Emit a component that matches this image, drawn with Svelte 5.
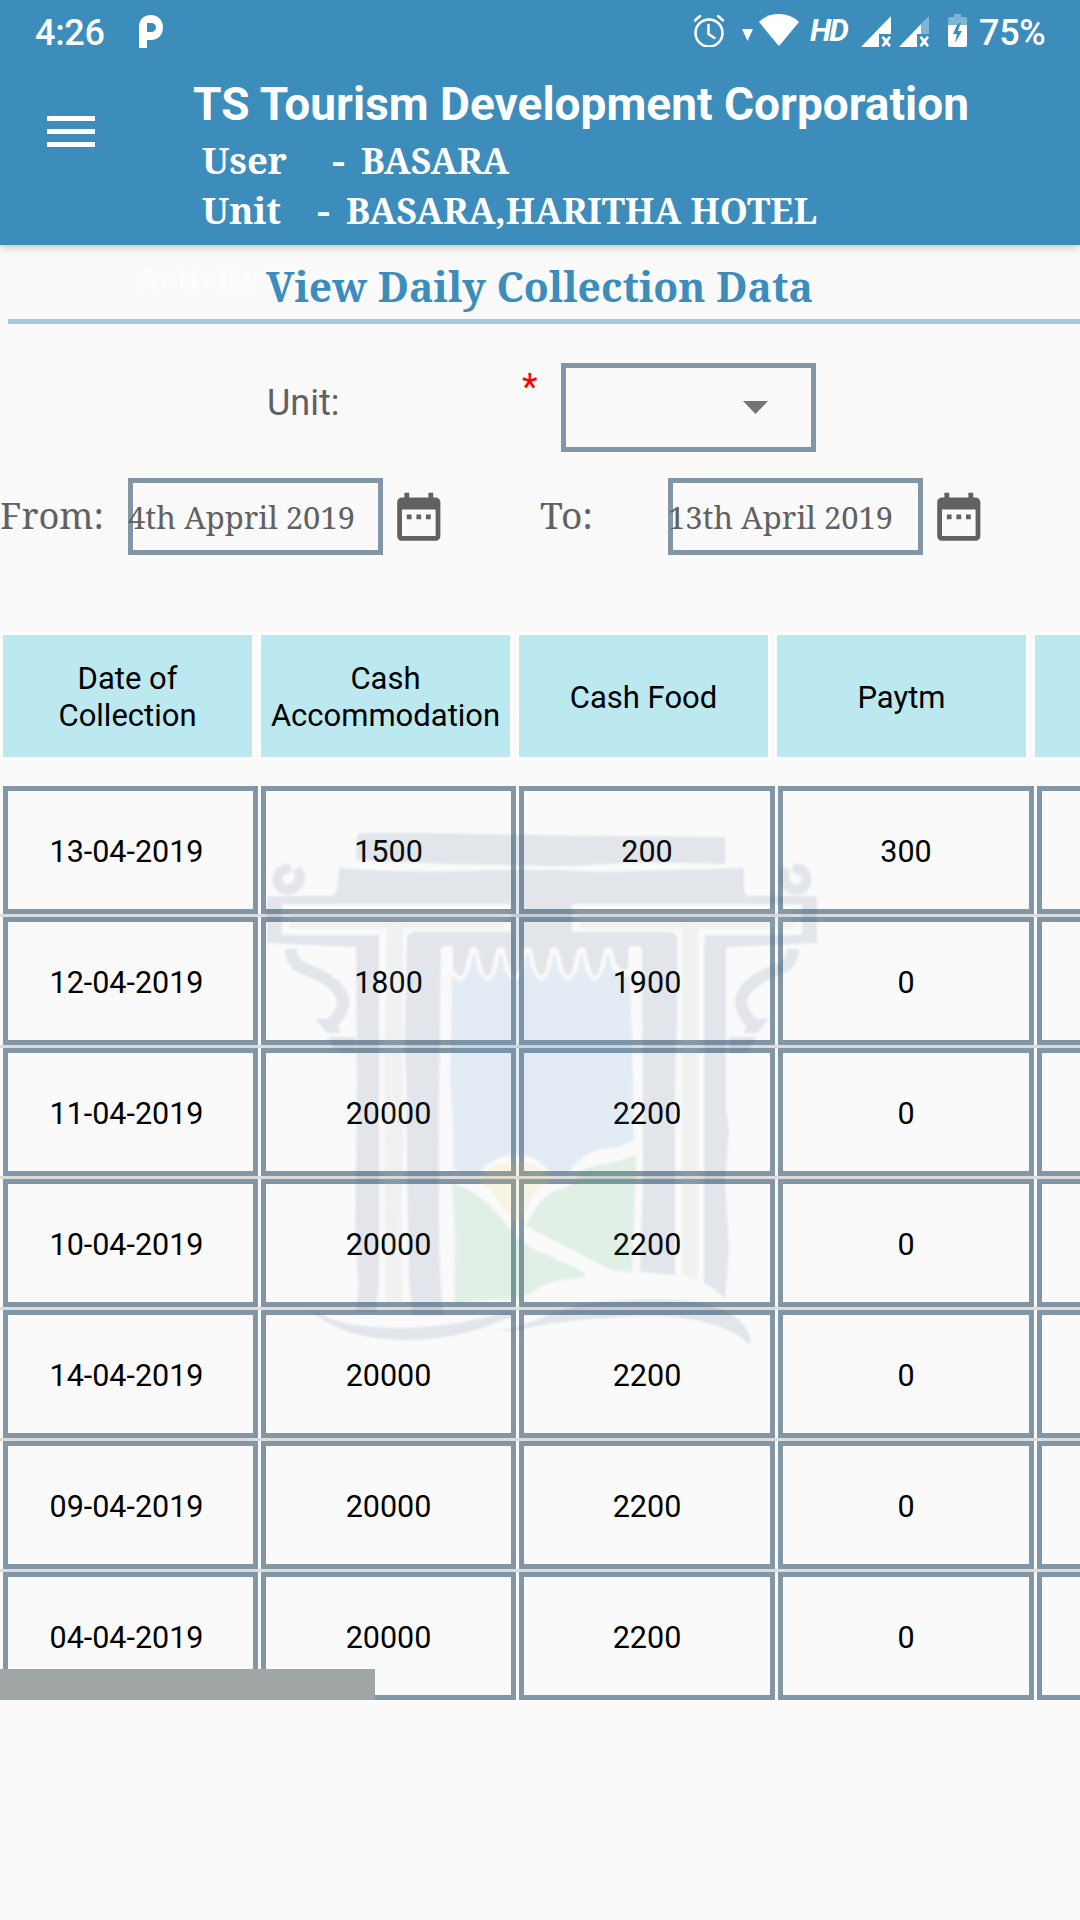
<script>
  const columns = ['Date of Collection', 'Cash Accommodation', 'Cash Food', 'Paytm', ''];
  const rows = [
    ['13-04-2019', '1500', '200', '300', ''],
    ['12-04-2019', '1800', '1900', '0', ''],
    ['11-04-2019', '20000', '2200', '0', ''],
    ['10-04-2019', '20000', '2200', '0', ''],
    ['14-04-2019', '20000', '2200', '0', ''],
    ['09-04-2019', '20000', '2200', '0', ''],
    ['04-04-2019', '20000', '2200', '0', '']
  ];

  // Scalloped edge of the emblem's curtain: lobes separated by narrow notches.
  function scallops(peak, shoulder, bottom, top, half) {
    let d = '';
    for (let i = 0; i < 6; i++) {
      const c = 460.3 + i * 26.9;
      const n = c + 13.45;
      d += ` Q${c - 3} ${bottom} ${c} ${bottom} Q${c + 4} ${bottom} ${n - half} ${shoulder}`;
      d += ` L${n - top} ${peak + 6} Q${n - top} ${peak} ${n} ${peak} Q${n + top} ${peak} ${n + top} ${peak + 6} L${n + half} ${shoulder}`;
    }
    return d;
  }
  const curtainEdge = 'M407 940 Q408 932 415 932 H669 Q677 932 677 940 V949 H642 Q641 946 638 946 L630 946 H452 Q449 945 446 946 Q441 946 440 950 H407 Z';
  const lobes = `M453 942 L453 968${scallops(947, 963, 976, 5, 7.5)} Q619 969 624 970 L628 968 L629 942 Z`;
  const sky = `M452 976${scallops(954, 969, 981, 2, 4)} Q617 974 623 976 L630 977 L632 1040 L634 1140 C622 1147 612 1149 600 1149 C585 1153 577 1162 569 1172 L552 1176 C545 1163 532 1155 517 1155 C500 1155 487 1163 478 1174 L467 1175 L453 1168 Q454 1120 450 1080 Z`;
</script>

{#snippet fit(text, width, size, cls)}
  <svg class="fit {cls}" {width} height="50" viewBox="0 0 {width} 50">
    <text x="0" y="38" font-size={size} textLength={width} lengthAdjust="spacingAndGlyphs">{text}</text>
  </svg>
{/snippet}

{#snippet calendar()}
  <svg class="calendar" viewBox="0 0 24 24">
    <path d="M9 11H7v2h2v-2zm4 0h-2v2h2v-2zm4 0h-2v2h2v-2zm2-7h-1V2h-2v2H8V2H6v2H5c-1.1 0-2 .9-2 2v14c0 1.1.9 2 2 2h14c1.1 0 2-.9 2-2V6c0-1.1-.9-2-2-2zm0 16H5V9h14v11z" />
  </svg>
{/snippet}

<div class="screen">
  <header>
    <div class="status">
      <span class="clock">4:26</span>
      <svg class="pay" viewBox="0 0 24 33"><path fill-rule="evenodd" d="M0 12C0 4 5 0 12 0s12 5 12 12.500S19 25 12 25H8v8H0zM8 8v9h4c3 0 5-2 5-4.500S15 8 12 8z" /></svg>
      <div class="tray">
        <svg class="alarm" viewBox="0 0 32 33">
          <circle cx="16" cy="19" r="13.500" /><path d="M15.500 11v9l6 4M2 6.500L7 2M30 6.500L25 2" />
        </svg>
        <svg class="drop" viewBox="0 0 11 12"><path d="M0 0H11L5.500 12z" /></svg>
        <svg class="wifi" viewBox="0 0 40 32"><path d="M0 8Q8 0 20 0T40 8L21 31q-1 1-2 0z" /></svg>
        <span class="hd">HD</span>
        <svg class="signal" viewBox="0 0 31 31"><path d="M0 31L29 1q1-1 1 0V18H18V31zM20.500 21.500l2-1.500 2.800 3 2.700-3 2 1.500-2.900 4 2.900 4-2 1.500-2.700-3-2.800 3-2-1.500 2.900-4z" /></svg>
        <svg class="signal second" viewBox="0 0 31 31"><path opacity=".35" d="M22 8L29 1q1-1 1 0V18H22z" /><path d="M0 31L22 8V18H18V31zM20.500 21.500l2-1.500 2.800 3 2.700-3 2 1.500-2.900 4 2.900 4-2 1.500-2.700-3-2.800 3-2-1.500 2.900-4z" /></svg>
        <svg class="battery" viewBox="0 0 19 33"><path opacity=".35" d="M6 0h7v3h4q2 0 2 2v6h-7l1-3-4 3H0V5q0-2 2-2h4z" /><path fill-rule="evenodd" d="M0 11h9l-4 9h4l-2 9 7-12h-4l2-6h7v20q0 2-2 2H2q-2 0-2-2z" /></svg>
        <span class="percent">75%</span>
      </div>
    </div>
    <div class="appbar">
      <div class="menu"><i></i><i></i><i></i></div>
      <div class="titles">
        <h1>{@render fit('TS Tourism Development Corporation', 776, 46, 'app-title')}</h1>
        <div class="info">
          {@render fit('User', 85, 36, 'bold user')}
          {@render fit('-', 13, 36, 'bold dash-a')}
          {@render fit('BASARA', 148, 36, 'bold')}
        </div>
        <div class="info">
          {@render fit('Unit', 79, 36, 'bold unit')}
          {@render fit('-', 13, 36, 'bold dash-b')}
          {@render fit('BASARA,HARITHA HOTEL', 471, 36, 'bold')}
        </div>
      </div>
    </div>
  </header>

  <div class="heading">
    <div class="ghost">{@render fit('Activity Name -', 239, 31, 'bold faint')}</div>
    {@render fit('View Daily Collection Data', 547, 41, 'bold page-title')}
  </div>

  <div class="unit-row">
    <span class="unit-label">Unit:</span>
    <span class="star">*</span>
    <div class="select"><svg viewBox="0 0 26 13"><path d="M0 0H25L12.500 13z" /></svg></div>
  </div>

  <div class="dates">
    <div class="date">
      <div class="label">{@render fit('From:', 104, 36, 'grey')}</div>
      <div class="box">{@render fit('4th Appril 2019', 227, 31, 'grey value')}</div>
      {@render calendar()}
    </div>
    <div class="date">
      <div class="label">{@render fit('To:', 53, 36, 'grey')}</div>
      <div class="box">{@render fit('13th April 2019', 225, 31, 'grey value')}</div>
      {@render calendar()}
    </div>
  </div>

  <div class="thead">
    {#each columns as c}<div class="th"><span>{c}</span></div>{/each}
  </div>

  <div class="tbody">
    {#each rows as r}
      <div class="tr">{#each r as v}<div class="td">{v}</div>{/each}</div>
    {/each}
    <div class="scrollbar"></div>
    <svg class="emblem" viewBox="240 786 600 600" width="600" height="600">
      <g class="navy">
        <path d="M357 838Q357 833 362 833L430 833Q560 836 725 837V864Q640 860 575 866Q470 865 420 863L356 860z" />
        <path d="M339 868Q400 873 460 871Q540 868 600 872Q680 870 744 868V887Q744 893 747 896H572V934H511V904H339Q320 900 332 896Q338 892 338 880z" />
        <path d="M560 896H760V904H560z" />
        <path d={curtainEdge} />
        <path d={lobes} />
        <path d="M407 938H441Q440 1000 440 1050Q438 1100 439 1180Q438 1260 443 1315H412L409 1280Q407 1200 407 1100L405 1040Z" />
        <path d="M642 945H677V1020Q675 1060 675 1100V1275L640 1272L643 1180z" />
        <path d="M356 944H379V1280L376 1312H356L359 1285L355 1240L357 1100z" />
        <path d="M704 944H726V1110L729 1130L725 1180L729 1250L725 1299Q715 1288 704 1283z" />
        <g id="side">
          <path d="M267 900Q267 896 271 896H345V904H282V935H379V947H356L267 943z" />
          <path class="line" stroke-width="10" d="M285 869C275 872 275 886 284 889C294 891 302 884 299 873L303 871" />
          <circle cx="286" cy="869" r="5.500" />
          <path class="line" stroke-width="12" d="M291 949C291 964 301 967 310 971C333 980 347 994 342 1008C340 1016 334 1020 330 1027" />
          <path d="M315 1019L342 1018L337 1025L341 1033H327z" />
          <path d="M328 1037L355 1037V1052L344 1053Q333 1053 328 1037z" />
        </g>
        <use href="#side" transform="translate(1084 0) scale(-1 1)" />
        <path d="M309 1307C330 1324 365 1328 401 1328C440 1328 480 1320 508 1311L516 1315C482 1330 448 1340 408 1340C365 1340 327 1330 309 1307z" />
        <path d="M493 1332C530 1327 555 1309 585 1304C620 1298 700 1296 721 1309C745 1320 753 1337 750 1345C730 1324 685 1316 653 1316C600 1317 540 1323 520 1330z" />
      </g>
      <g class="pale">
        <path d="M289 910H504V929H403V1160Q400 1240 403 1305L385 1300L384 1060L387 929H289z" />
        <path d="M577 910H793V929H698V1280L682 1276V929H580z" />
      </g>
      <path class="sky" d={sky} />
      <path class="sun" d="M479 1181C485 1168 500 1162 517 1162C534 1162 547 1170 549 1181C538 1190 532 1194 528 1207Q520 1222 514 1222Q510 1214 502 1207Q496 1192 479 1181z" />
      <g class="grass">
        <path d="M452 1183C475 1190 490 1203 510 1229Q518 1243 545 1254L576 1268Q592 1275 581 1278Q554 1280 542 1286C527 1296 522 1300 487 1300Q465 1301 454 1307L455 1240z" />
        <path d="M636 1154C613 1166 590 1163 581 1172C574 1180 572 1187 560 1189C543 1194 535 1207 526 1226L611 1270L632 1273L635 1200z" />
      </g>
    </svg>
  </div>
</div>

<style>
  :global(body) { margin: 0; background: #fafafa; }
  .screen { width: 1080px; height: 1920px; overflow: hidden; background: #fafafa; font-family: Roboto, sans-serif; }
  header { position: relative; z-index: 1; height: 245px; background: #3d8dbc; color: #fff; box-shadow: 0 2px 9px rgba(0, 0, 0, .24); }
  svg { display: block; flex: none; fill: #fff; }
  .status { height: 64px; display: flex; align-items: flex-start; padding-left: 35px; }
  .clock, .percent { font-size: 36px; font-weight: 500; line-height: 42px; padding-top: 12px; letter-spacing: -.3px; }
  .clock { width: 104px; }
  .pay { width: 24px; height: 33px; margin-top: 15px; }
  .tray { display: flex; margin-left: 530px; }
  .alarm { width: 32px; height: 33px; margin: 14px 17px 0 0; fill: none; stroke: #fff; stroke-width: 2.500px; stroke-linecap: round; }
  .drop { width: 11px; height: 12px; margin: 29px 6px 0 0; }
  .wifi { width: 40px; height: 32px; margin: 14px 11px 0 0; }
  .hd { width: 51px; font-size: 31px; line-height: 36px; font-weight: 700; font-style: italic; letter-spacing: -2px; padding-top: 13px; }
  .signal { width: 31px; height: 31px; margin-top: 16px; }
  .second { margin-left: 7px; }
  .battery { width: 19px; height: 33px; margin: 14px 12px 0 18px; }
  .appbar { display: flex; }
  .menu { width: 48px; margin: 52px 98px 0 47px; display: flex; flex-direction: column; gap: 8px; }
  .menu i { height: 5px; background: #fff; }
  .titles { display: flex; flex-direction: column; }
  h1 { margin: 18px 0 0; height: 48px; }
  .info { display: flex; height: 50px; padding-left: 9px; }
  .info:nth-child(2) { margin-top: 6px; }
  .user { margin-right: 45px; }
  .unit { margin-right: 36px; }
  .dash-a, .dash-b { margin-right: 16px; }
  .fit { overflow: visible; font-family: 'Noto Serif', 'Droid Serif', 'DejaVu Serif Condensed', 'DejaVu Serif', serif; }
  .app-title { font-family: Roboto, sans-serif; font-weight: 700; }
  .bold { font-weight: 700; }
  .grey { fill: #616161; }
  .heading { position: relative; height: 74px; margin-left: 8px; border-bottom: 5px solid #a3c8de; padding-left: 258px; }
  .ghost { position: absolute; left: 129px; top: 6px; }
  .faint { fill: #fdfdfb; }
  .page-title { position: relative; top: 19px; fill: #3d8dbc; }
  .unit-row { display: flex; margin-top: 40px; height: 89px; padding-left: 267px; }
  .heading + .unit-row { margin-top: 39px; }
  .unit-label { width: 255px; font-size: 36px; line-height: 42px; color: #616161; padding-top: 19px; }
  .star { width: 39px; font-size: 36px; line-height: 42px; color: #f00; padding-top: 3px; }
  .select { box-sizing: border-box; width: 255px; height: 89px; border: 5px solid #8296a6; padding: 33px 0 0 177px; }
  .select svg { width: 26px; height: 13px; fill: #757575; }
  .dates { display: grid; grid-template-columns: 540px 540px; margin-top: 26px; height: 77px; }
  .date { display: flex; }
  .label { width: 128px; padding-top: 13px; }
  .box { box-sizing: border-box; width: 255px; height: 77px; border: 5px solid #8296a6; padding-top: 8px; }
  .value { margin-left: -5px; }
  .calendar { width: 57.600px; height: 57.600px; margin: 9.500px 0 0 6.500px; fill: #616161; }
  .thead { display: flex; gap: 3px; width: 1290px; margin-top: 77px; }
  .th { box-sizing: border-box; width: 255px; height: 128px; border: 3px solid #fff; background: #bce8f0; display: flex; align-items: center; justify-content: center; text-align: center; font-size: 31px; line-height: 37px; color: #000; padding-top: 2px; }
  .th span { width: 240px; }
  .tbody { position: relative; margin-top: 26px; width: 1295px; height: 914px; }
  .tr { display: flex; gap: 3px; height: 128px; padding-left: 3px; border-bottom: 3px solid #dcdcdc; }
  .tr:nth-child(7) { border: 0; }
  .td { box-sizing: border-box; width: 255px; border: 5px solid #8296a6; display: flex; align-items: center; justify-content: center; font-size: 30.500px; line-height: 37px; color: #000; padding: 2px 8px 0 0; }
  .td:nth-child(n + 3) { width: 256px; padding-right: 0; }
  .td:nth-child(2) { padding-right: 0; }
  .scrollbar { position: absolute; left: 0; bottom: 0; width: 375px; height: 31px; background: #a0a6a5; }
  .emblem { position: absolute; left: 240px; top: 0; opacity: .12; filter: blur(1px); }
  .navy { fill: rgb(58, 82, 122); }
  .line { fill: none; stroke: rgb(58, 82, 122); }
  .pale { fill: rgb(170, 186, 178); }
  .sky { fill: rgb(68, 140, 202); }
  .sun { fill: rgb(234, 202, 66); }
  .grass { fill: rgb(50, 170, 90); }
</style>
